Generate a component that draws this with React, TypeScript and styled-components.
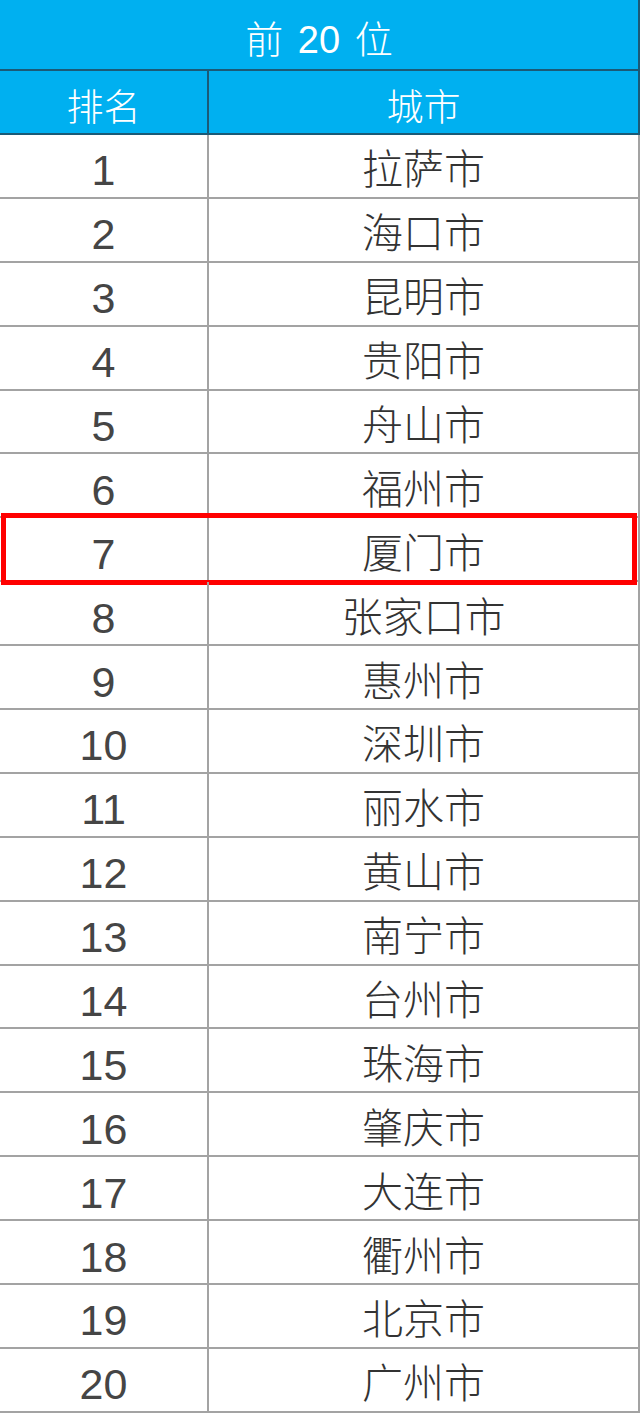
import React from "react";
import styled, { createGlobalStyle, css } from "styled-components";

const GlobalStyle = createGlobalStyle`
  html, body {
    margin: 0;
    padding: 0;
    background: #ffffff;
  }
  body {
    font-family: "Liberation Sans", "Noto Sans CJK SC", sans-serif;
  }
`;

const BLUE = "#00b0f0";
const DARK_LINE = "#1b5a76";
const GRAY_LINE = "#a3a3a3";

const Page = styled.div`
  width: 638px;
  border-right: 2px solid ${GRAY_LINE};
`;

const TitleBar = styled.div`
  height: 71px;
  box-sizing: border-box;
  padding-top: 3px;
  background: ${BLUE};
  border-bottom: 2px solid ${DARK_LINE};
  box-shadow: 2px 0 0 ${DARK_LINE};
  color: #ffffff;
  font-size: 38px;
  font-weight: 300;
  display: flex;
  align-items: center;
  justify-content: center;
  word-spacing: 4px;
`;

const Row = styled.div<{ $head?: boolean; $marked?: boolean }>`
  display: grid;
  grid-template-columns: 209px 1fr;
  height: 63.9px;
  box-sizing: border-box;
  border-bottom: 2px solid ${GRAY_LINE};
  color: #333333;
  font-size: 41px;
  font-weight: 300;
  position: relative;

  ${({ $head }) =>
    $head &&
    css`
      height: 64px;
      background: ${BLUE};
      color: #ffffff;
      font-size: 37px;
      border-bottom-color: ${DARK_LINE};
      box-shadow: 2px 0 0 ${DARK_LINE};
    `}

  ${({ $marked }) =>
    $marked &&
    css`
      &::after {
        content: "";
        position: absolute;
        top: -5px;
        bottom: -5px;
        left: 1px;
        right: 1px;
        border: 5px solid #ff0000;
        pointer-events: none;
      }
    `}
`;

const Cell = styled.div<{ $first?: boolean; $head?: boolean }>`
  display: flex;
  align-items: center;
  justify-content: center;
  padding-top: ${({ $head }) => ($head ? "12px" : "10px")};
  box-sizing: border-box;
  line-height: 1;
  ${({ $first, $head }) =>
    $first &&
    css`
      border-right: 2px solid ${$head ? DARK_LINE : GRAY_LINE};
    `}
  ${({ $first, $head }) =>
    $first &&
    !$head &&
    css`
      font-size: 43px;
      color: #454545;
    `}
`;

const cities = [
  "拉萨市",
  "海口市",
  "昆明市",
  "贵阳市",
  "舟山市",
  "福州市",
  "厦门市",
  "张家口市",
  "惠州市",
  "深圳市",
  "丽水市",
  "黄山市",
  "南宁市",
  "台州市",
  "珠海市",
  "肇庆市",
  "大连市",
  "衢州市",
  "北京市",
  "广州市",
];

export default function App() {
  return (
    <>
      <GlobalStyle />
      <Page>
        <TitleBar>前 20 位</TitleBar>
        <Row $head>
          <Cell $first $head>
            排名
          </Cell>
          <Cell $head>城市</Cell>
        </Row>
        {cities.map((city, index) => (
          <Row key={city} $marked={city === "厦门市"}>
            <Cell $first>{index + 1}</Cell>
            <Cell>{city}</Cell>
          </Row>
        ))}
      </Page>
    </>
  );
}
